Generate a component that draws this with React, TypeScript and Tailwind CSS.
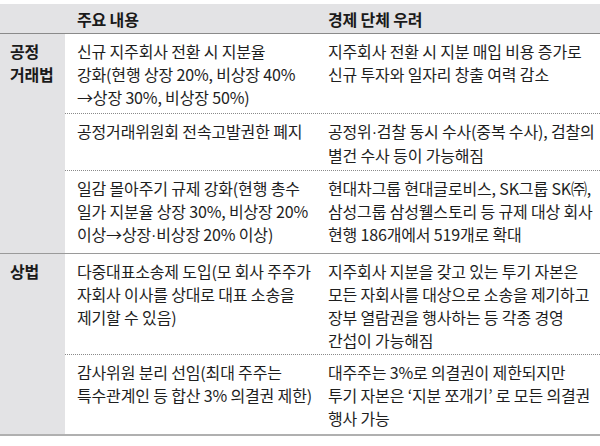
const sections = [
  {
    title: ["공정", "거래법"],
    rows: [
      {
        h: "h-[80px]",
        left: ["신규 지주회사 전환 시 지분율", "강화(현행 상장 20%, 비상장 40%", "→상장 30%, 비상장 50%)"],
        right: ["지주회사 전환 시 지분 매입 비용 증가로", "신규 투자와 일자리 창출 여력 감소"],
      },
      {
        h: "h-[57px]",
        left: ["공정거래위원회 전속고발권한 폐지"],
        right: ["공정위·검찰 동시 수사(중복 수사), 검찰의", "별건 수사 등이 가능해짐"],
      },
      {
        h: "h-[82px]",
        left: ["일감 몰아주기 규제 강화(현행 총수", "일가 지분율 상장 30%, 비상장 20%", "이상→상장·비상장 20% 이상)"],
        right: ["현대차그룹 현대글로비스, SK그룹 SK㈜,", "삼성그룹 삼성웰스토리 등 규제 대상 회사", "현행 186개에서 519개로 확대"],
      },
    ],
  },
  {
    title: ["상법"],
    rows: [
      {
        h: "h-[101px]",
        left: ["다중대표소송제 도입(모 회사 주주가", "자회사 이사를 상대로 대표 소송을", "제기할 수 있음)"],
        right: ["지주회사 지분을 갖고 있는 투기 자본은", "모든 자회사를 대상으로 소송을 제기하고", "장부 열람권을 행사하는 등 각종 경영", "간섭이 가능해짐"],
      },
      {
        h: "h-[79px]",
        left: ["감사위원 분리 선임(최대 주주는", "특수관계인 등 합산 3% 의결권 제한)"],
        right: ["대주주는 3%로 의결권이 제한되지만", "투기 자본은 ‘지분 쪼개기’ 로 모든 의결권", "행사 가능"],
      },
    ],
  },
]

// the CJK middle dot is full width, the print uses a narrow one
const Line = ({ text }: { text: string }) => {
  const parts = text.split("·")
  return (
    <div className="whitespace-nowrap leading-[23px]">
      {parts.map((p, i) => (
        <span key={i}>
          {i > 0 && <span className="font-['Liberation_Sans',sans-serif]">·</span>}
          {p}
        </span>
      ))}
    </div>
  )
}

const Lines = ({ lines }: { lines: string[] }) => (
  <div className="pt-[6px]">
    {lines.map((line, i) => (
      <Line key={i} text={line} />
    ))}
  </div>
)

export default function App() {
  return (
    <div className="w-[600px] h-[446px] bg-white pt-[4px] text-[16px] tracking-[-0.01em] text-[#1e1e1e] font-['Noto_Sans_CJK_KR','Noto_Sans',sans-serif] overflow-hidden">
      {/* header */}
      <div className="flex h-[30px] items-center bg-[#e3e3e5] border-b border-[#8a8a8a] font-bold text-[#1a1a1a]">
        <div className="w-[65px]" />
        <div className="w-[251px] pl-[12px]">주요 내용</div>
        <div className="flex-1 pl-[12px]">경제 단체 우려</div>
      </div>

      {sections.map((section, si) => (
        <div
          key={si}
          className={`flex ${si === sections.length - 1 ? "border-b-2 border-[#b0b0b0]" : "border-b border-[#9a9a9a]"}`}
        >
          <div className="w-[65px] shrink-0 bg-[#e3e3e5] pl-[10px] pt-[6px] font-bold text-[#1a1a1a]">
            {section.title.map((t) => (
              <div key={t} className="leading-[23px]">
                {t}
              </div>
            ))}
          </div>
          <div className="flex-1">
            {section.rows.map((row, ri) => (
              <div
                key={ri}
                className={`flex ${row.h} ${ri < section.rows.length - 1 ? "border-b border-dotted border-[#8a8a8a]" : ""}`}
              >
                <div className="w-[251px] shrink-0 pl-[12px] overflow-hidden">
                  <Lines lines={row.left} />
                </div>
                <div className="flex-1 pl-[12px]">
                  <Lines lines={row.right} />
                </div>
              </div>
            ))}
          </div>
        </div>
      ))}
    </div>
  )
}
